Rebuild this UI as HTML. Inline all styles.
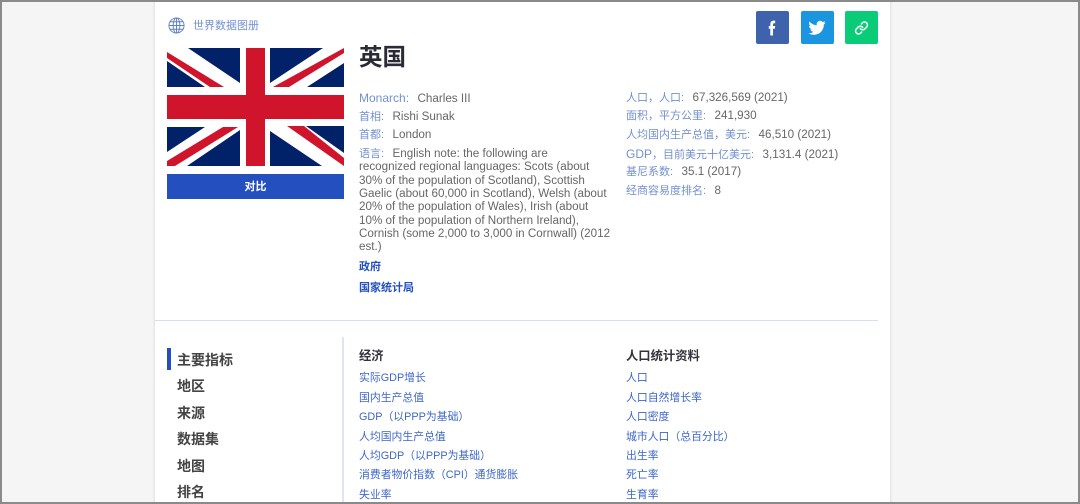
<!DOCTYPE html>
<html lang="zh">
<head>
<meta charset="utf-8">
<title>英国</title>
<style>
html,body{margin:0;padding:0}
body{width:1080px;height:504px;overflow:hidden;background:#f5f5f5;position:relative;font-family:"Liberation Sans","Noto Sans CJK SC",sans-serif;font-size:11.65px;color:#666}
#w{position:absolute;left:0;top:0;width:1080px;height:504px;filter:blur(.3px)}
.frame{position:absolute;left:0;top:0;width:1076px;height:500px;border:2px solid #8a8a8a;z-index:5;pointer-events:none}
.card{position:absolute;left:155px;top:0;width:735px;height:504px;background:#fff;box-shadow:0 0 3px rgba(0,0,0,.15)}
.t{position:absolute;white-space:nowrap;line-height:16px;height:16px}
.l{color:#7391cf;font-size:11px;padding-right:2px}
.l i{font-style:normal;font-size:12px}
.a{color:#3d66c9;font-size:10.85px;top:0}
.b{color:#2350be;font-weight:bold;font-size:11px}
.m{color:#444;font-weight:bold;font-size:14px;line-height:20px;height:20px}
.h{color:#33333d;font-weight:bold;font-size:12.3px}
.s{position:absolute;top:11px;width:33px;height:33px;border-radius:2px}
.s svg{position:absolute;left:0;top:0}
</style>
</head>
<body>
<div id="w">
<div class="card"></div>

<svg style="position:absolute;left:168px;top:17px" width="17" height="17" viewBox="0 0 18 18" fill="none" stroke="#5f80c4" stroke-width="1"><circle cx="9" cy="9" r="8"/><ellipse cx="9" cy="9" rx="3.6" ry="8"/><path d="M9 1v16M1.200 9h15.600M2.400 5h13.200M2.400 13h13.200"/></svg>
<div class="t" style="left:193px;top:18px;color:#7391cf;font-size:11px">世界数据图册</div>

<div class="s" style="left:756px;background:#3f62ad"><svg width="33" height="33" viewBox="0 0 33 33"><path fill="#fff" d="M14.300 24.500V17.800H12.800V15h1.500v-1.700c0-2.400 1.300-3.700 3.400-3.700.7 0 1.200.1 1.500.1v2.500h-1c-1 0-1.200.5-1.200 1.200V15h2.200l-.3 2.800h-1.900v6.700z"/></svg></div>
<div class="s" style="left:801px;background:#1c95e0"><svg width="33" height="33" viewBox="0 0 33 33"><path fill="#fff" d="M24.500 11.400c-.6.3-1.300.5-2 .6.700-.4 1.300-1.100 1.500-1.900-.7.4-1.400.7-2.200.9a3.500 3.500 0 0 0-6 3.200c-2.900-.1-5.500-1.500-7.200-3.700-.9 1.600-.5 3.600 1.100 4.700-.6 0-1.100-.2-1.600-.4 0 1.700 1.200 3.100 2.800 3.500-.5.100-1 .2-1.600.1.400 1.400 1.700 2.400 3.300 2.400a7 7 0 0 1-5.200 1.500c1.600 1 3.400 1.500 5.400 1.500 6.500 0 10.200-5.400 10-10.300.7-.5 1.300-1.200 1.700-2.100z"/></svg></div>
<div class="s" style="left:845px;background:#0acb78"><svg width="33" height="33" viewBox="0 0 33 33" fill="none" stroke="#fff" stroke-width="2.500" stroke-linecap="round" stroke-linejoin="round"><g transform="translate(9.300 9.800) scale(.6)"><path d="M10 13a5 5 0 0 0 7.540.54l3-3a5 5 0 0 0-7.070-7.070l-1.720 1.710"/><path d="M14 11a5 5 0 0 0-7.540-.54l-3 3a5 5 0 0 0 7.070 7.070l1.710-1.710"/></g></svg></div>

<svg style="position:absolute;left:167px;top:48px" width="177" height="118" viewBox="0 0 177 118">
<rect width="177" height="118" fill="#fff"/>
<g fill="#012169">
<polygon points="21,0 73,0 73,35"/>
<polygon points="0,13 0,39 38,39"/>
<polygon points="103,0 103,35 156,0"/>
<polygon points="140,39 177,39 177,15"/>
<polygon points="0,79 38,79 0,104"/>
<polygon points="73,82 73,118 20,118"/>
<polygon points="103,83 103,118 155,118"/>
<polygon points="139,78 177,78 177,105"/>
</g>
<g fill="#cf142b">
<polygon points="0,4 57,39 43,39 0,10"/>
<polygon points="106,39 122,39 177,5 177,0"/>
<polygon points="56,79 71,79 8,118 0,118 0,113"/>
<polygon points="120,78 137,78 177,110 177,118"/>
<rect x="79" y="0" width="19" height="118"/>
<rect x="0" y="47" width="177" height="24"/>
</g>
</svg>
<div style="position:absolute;left:167px;top:174px;width:177px;height:25px;background:#2350be;color:#fff;font-weight:bold;font-size:11px;line-height:26px;text-align:center">对比</div>

<div class="t" style="left:359px;top:43px;height:28px;line-height:28px;font-size:23.500px;font-weight:bold;color:#2b2b38">英国</div>

<div class="t" style="left:359px;top:90px"><span class="l"><i>Monarch:</i></span>&nbsp;&nbsp;Charles III</div>
<div class="t" style="left:359px;top:109px"><span class="l">首相:</span>&nbsp;&nbsp;Rishi Sunak</div>
<div class="t" style="left:359px;top:127px"><span class="l">首都:</span>&nbsp;&nbsp;London</div>
<div class="t" style="left:359px;top:146px"><span class="l">语言:</span>&nbsp;&nbsp;English note: the following are</div>
<div class="t" style="left:359px;top:159px">recognized regional languages: Scots (about</div>
<div class="t" style="left:359px;top:173px">30% of the population of Scotland), Scottish</div>
<div class="t" style="left:359px;top:186px">Gaelic (about 60,000 in Scotland), Welsh (about</div>
<div class="t" style="left:359px;top:199px">20% of the population of Wales), Irish (about</div>
<div class="t" style="left:359px;top:213px">10% of the population of Northern Ireland),</div>
<div class="t" style="left:359px;top:226px">Cornish (some 2,000 to 3,000 in Cornwall) (2012</div>
<div class="t" style="left:359px;top:239px">est.)</div>
<div class="t b" style="left:359px;top:259px">政府</div>
<div class="t b" style="left:359px;top:280px">国家统计局</div>

<div class="t" style="left:626px;top:90px"><span class="l">人口&#xFF0C;人口:</span>&nbsp;&nbsp;67,326,569 (2021)</div>
<div class="t" style="left:626px;top:108px"><span class="l">面积&#xFF0C;平方公里:</span>&nbsp;&nbsp;241,930</div>
<div class="t" style="left:626px;top:127px"><span class="l">人均国内生产总值&#xFF0C;美元:</span>&nbsp;&nbsp;46,510 (2021)</div>
<div class="t" style="left:626px;top:146px"><span class="l"><i>GDP</i>&#xFF0C;目前美元十亿美元:</span>&nbsp;&nbsp;3,131.4 (2021)</div>
<div class="t" style="left:626px;top:164px"><span class="l">基尼系数:</span>&nbsp;&nbsp;35.1 (2017)</div>
<div class="t" style="left:626px;top:183px"><span class="l">经商容易度排名:</span>&nbsp;&nbsp;8</div>

<div style="position:absolute;left:155px;top:320px;width:723px;height:1px;background:#d3e0f3"></div>

<div style="position:absolute;left:167px;top:348px;width:4px;height:22px;background:#2350be"></div>
<div class="t m" style="left:177px;top:350px">主要指标</div>
<div class="t m" style="left:177px;top:376px">地区</div>
<div class="t m" style="left:177px;top:403px">来源</div>
<div class="t m" style="left:177px;top:429px">数据集</div>
<div class="t m" style="left:177px;top:456px">地图</div>
<div class="t m" style="left:177px;top:482px">排名</div>

<div style="position:absolute;left:342px;top:337px;width:2px;height:167px;background:#dfe5f2"></div>

<div class="t h" style="left:359px;top:348px">经济</div>
<div class="t a" style="left:359px;top:370px">实际GDP增长</div>
<div class="t a" style="left:359px;top:390px">国内生产总值</div>
<div class="t a" style="left:359px;top:409px">GDP&#xFF08;以PPP为基础&#xFF09;</div>
<div class="t a" style="left:359px;top:429px">人均国内生产总值</div>
<div class="t a" style="left:359px;top:448px">人均GDP&#xFF08;以PPP为基础&#xFF09;</div>
<div class="t a" style="left:359px;top:467px">消费者物价指数&#xFF08;CPI&#xFF09;通货膨胀</div>
<div class="t a" style="left:359px;top:487px">失业率</div>

<div class="t h" style="left:626px;top:348px">人口统计资料</div>
<div class="t a" style="left:626px;top:370px">人口</div>
<div class="t a" style="left:626px;top:390px">人口自然增长率</div>
<div class="t a" style="left:626px;top:409px">人口密度</div>
<div class="t a" style="left:626px;top:429px">城市人口&#xFF08;总百分比&#xFF09;</div>
<div class="t a" style="left:626px;top:448px">出生率</div>
<div class="t a" style="left:626px;top:467px">死亡率</div>
<div class="t a" style="left:626px;top:487px">生育率</div>
</div>
<div class="frame"></div>
</body>
</html>
